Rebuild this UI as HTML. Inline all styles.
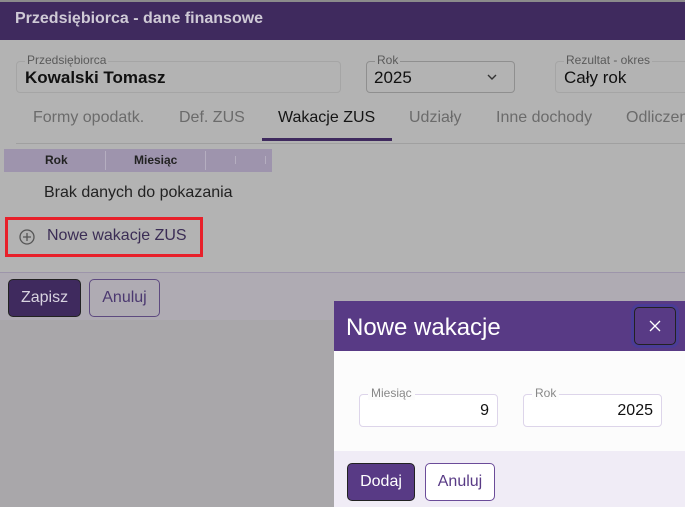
<!DOCTYPE html>
<html><head><meta charset="utf-8"><style>
*{box-sizing:border-box;margin:0;padding:0}
body{width:685px;height:507px;overflow:hidden;font-family:"Liberation Sans",sans-serif;background:#a9a7aa;position:relative}
.a{position:absolute}
.fld{position:absolute;border:1px solid #a5a5a5;border-radius:4px;height:32px;top:61px}
.lbl{position:absolute;top:-9px;left:8px;font-size:12px;color:#5a5a5a;background:#b3b3b3;padding:0 2px}
.val{position:absolute;left:8px;top:6px;font-size:17px;color:#111}
.tab{position:absolute;top:109px;font-size:16px;color:#6b6b6b}
</style></head><body>
<div class="a" style="left:0;top:0;width:685px;height:272px;background:#b3b3b3"></div>
<div class="a" style="left:0;top:272px;width:685px;height:48px;background:#afabb3;border-top:1px solid #9d95aa"></div>
<div class="a" style="left:0;top:0;width:685px;height:40px;background:#3f2a5e;border-top:2px solid #8b8b8b"></div>
<div class="a" style="left:15px;top:10px;font-size:16px;font-weight:bold;color:#cfcad6">Przedsiębiorca - dane finansowe</div>
<div class="fld" style="left:16px;width:325px"><span class="lbl">Przedsiębiorca</span><span class="val" style="font-weight:bold;left:8px">Kowalski Tomasz</span></div>
<div class="fld" style="left:366px;width:149px;border-color:#8f8f8f"><span class="lbl">Rok</span><span class="val" style="left:7px">2025</span>
<svg class="a" style="left:119px;top:10px" width="12" height="10"><path d="M2 3l4 4 4-4" stroke="#333" stroke-width="1.4" fill="none"/></svg></div>
<div class="fld" style="left:555px;width:140px"><span class="lbl">Rezultat - okres</span><span class="val">Cały rok</span></div>
<div class="tab" style="left:33px">Formy opodatk.</div>
<div class="tab" style="left:179px">Def. ZUS</div>
<div class="tab" style="left:278px;color:#151515">Wakacje ZUS</div>
<div class="tab" style="left:409px">Udziały</div>
<div class="tab" style="left:496px">Inne dochody</div>
<div class="tab" style="left:626px">Odliczen</div>
<div class="a" style="left:262px;top:138px;width:130px;height:3px;background:#3f2a5e"></div>
<div class="a" style="left:16px;top:143px;width:669px;height:1px;background:#a0a0a0"></div>
<div class="a" style="left:4px;top:149px;width:268px;height:23px;background:#9e94ad"></div>
<div class="a" style="left:45px;top:153px;font-size:12px;font-weight:bold;color:#222">Rok</div>
<div class="a" style="left:105px;top:151px;width:1px;height:19px;background:#b5aec0"></div>
<div class="a" style="left:134px;top:153px;font-size:12px;font-weight:bold;color:#222">Miesiąc</div>
<div class="a" style="left:205px;top:151px;width:1px;height:19px;background:#b5aec0"></div>
<div class="a" style="left:235px;top:156px;width:1px;height:8px;background:#b5aec0"></div>
<div class="a" style="left:265px;top:156px;width:1px;height:8px;background:#b5aec0"></div>
<div class="a" style="left:44px;top:184px;font-size:16px;color:#222">Brak danych do pokazania</div>
<div class="a" style="left:5px;top:217px;width:198px;height:40px;border:3px solid #e8202a"></div>
<svg class="a" style="left:18px;top:228px" width="18" height="18"><circle cx="9" cy="9" r="7" stroke="#555" stroke-width="1.3" fill="none"/><path d="M9 5v8M5 9h8" stroke="#555" stroke-width="1.3"/></svg>
<div class="a" style="left:47px;top:227px;font-size:16px;color:#3b2d55">Nowe wakacje ZUS</div>
<div class="a" style="left:8px;top:279px;width:73px;height:38px;background:#3f2a5e;border:1px solid #222;border-radius:5px;color:#d8d3e0;font-size:16px;text-align:center;line-height:36px">Zapisz</div>
<div class="a" style="left:89px;top:279px;width:71px;height:38px;border:1px solid #5e4a80;border-radius:5px;color:#4b3870;font-size:16px;text-align:center;line-height:36px">Anuluj</div>
<div class="a" style="left:334px;top:301px;width:351px;height:206px;background:#fcfcfc">
<div class="a" style="left:0;top:0;width:351px;height:50px;background:#583a85"></div>
<div class="a" style="left:12px;top:13px;font-size:24px;color:#fff">Nowe wakacje</div>
<div class="a" style="left:300px;top:6px;width:42px;height:38px;border:1px solid #222;border-radius:5px;box-shadow:0 0 0 3px #4a3c96"></div>
<svg class="a" style="left:314px;top:18px" width="14" height="14"><path d="M2 2l10 10M12 2L2 12" stroke="#fff" stroke-width="1.3"/></svg>
<div class="a" style="left:25px;top:93px;width:139px;height:33px;border:1px solid #ddd5ea;border-radius:4px;background:#fff"><span class="a" style="left:8px;top:-9px;font-size:12px;color:#888;background:#fcfcfc;padding:0 3px">Miesiąc</span><span class="a" style="right:8px;top:7px;font-size:16px;color:#111">9</span></div>
<div class="a" style="left:189px;top:93px;width:139px;height:33px;border:1px solid #ddd5ea;border-radius:4px;background:#fff"><span class="a" style="left:8px;top:-9px;font-size:12px;color:#888;background:#fcfcfc;padding:0 3px">Rok</span><span class="a" style="right:8px;top:7px;font-size:16px;color:#111">2025</span></div>
<div class="a" style="left:0;top:150px;width:351px;height:56px;background:#f0ecf6"></div>
<div class="a" style="left:13px;top:162px;width:68px;height:38px;background:#583a85;border:1px solid #222;border-radius:5px;color:#fff;font-size:16px;text-align:center;line-height:36px">Dodaj</div>
<div class="a" style="left:91px;top:162px;width:70px;height:38px;border:1px solid #6b4c99;border-radius:5px;color:#583a85;font-size:16px;text-align:center;line-height:36px;background:#fff">Anuluj</div>
</div>
</body></html>
